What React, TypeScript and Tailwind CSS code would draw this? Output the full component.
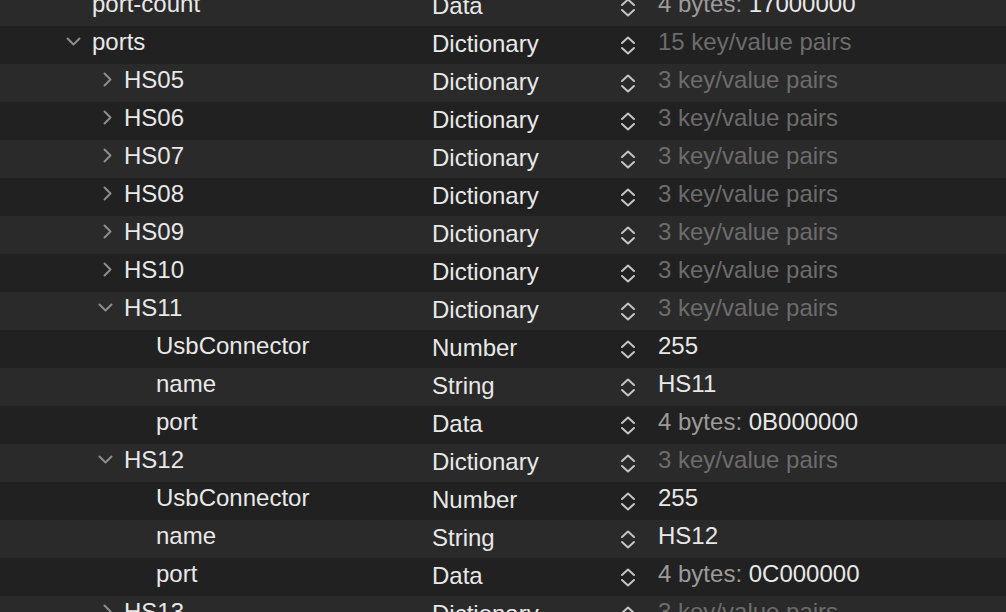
import React from 'react';

type Row = {
  key: string;
  level: number;
  type: string;
  value: string;
  valuePrefix?: string;
  expand?: 'open' | 'closed';
};

const rows: Row[] = [
  { key: 'port-count', level: 0, type: 'Data', valuePrefix: '4 bytes: ', value: '17000000' },
  { key: 'ports', level: 0, type: 'Dictionary', value: '15 key/value pairs', expand: 'open' },
  { key: 'HS05', level: 1, type: 'Dictionary', value: '3 key/value pairs', expand: 'closed' },
  { key: 'HS06', level: 1, type: 'Dictionary', value: '3 key/value pairs', expand: 'closed' },
  { key: 'HS07', level: 1, type: 'Dictionary', value: '3 key/value pairs', expand: 'closed' },
  { key: 'HS08', level: 1, type: 'Dictionary', value: '3 key/value pairs', expand: 'closed' },
  { key: 'HS09', level: 1, type: 'Dictionary', value: '3 key/value pairs', expand: 'closed' },
  { key: 'HS10', level: 1, type: 'Dictionary', value: '3 key/value pairs', expand: 'closed' },
  { key: 'HS11', level: 1, type: 'Dictionary', value: '3 key/value pairs', expand: 'open' },
  { key: 'UsbConnector', level: 2, type: 'Number', value: '255' },
  { key: 'name', level: 2, type: 'String', value: 'HS11' },
  { key: 'port', level: 2, type: 'Data', valuePrefix: '4 bytes: ', value: '0B000000' },
  { key: 'HS12', level: 1, type: 'Dictionary', value: '3 key/value pairs', expand: 'open' },
  { key: 'UsbConnector', level: 2, type: 'Number', value: '255' },
  { key: 'name', level: 2, type: 'String', value: 'HS12' },
  { key: 'port', level: 2, type: 'Data', valuePrefix: '4 bytes: ', value: '0C000000' },
  { key: 'HS13', level: 1, type: 'Dictionary', value: '3 key/value pairs', expand: 'closed' },
];

// chevron box is 26px wide, text starts after it
const indents = ['pl-[66px]', 'pl-[98px]', 'pl-[130px]'];

const Disclosure = ({ state }: { state?: 'open' | 'closed' }) => (
  <div className="w-[26px] h-[31px] shrink-0 flex items-center">
    {state === 'open' && (
      <svg width="15" height="9" viewBox="0 0 15 9">
        <polyline points="1.5,1.5 7.5,7.5 13.5,1.5" fill="none" stroke="#8d8d8d" strokeWidth="2" strokeLinecap="round" strokeLinejoin="round" />
      </svg>
    )}
    {state === 'closed' && (
      <svg width="9" height="15" viewBox="0 0 9 15" className="ml-[5px]">
        <polyline points="1.5,1.5 7.5,7.5 1.5,13.5" fill="none" stroke="#8d8d8d" strokeWidth="2" strokeLinecap="round" strokeLinejoin="round" />
      </svg>
    )}
  </div>
);

const Stepper = () => (
  <svg width="16" height="19" viewBox="0 0 16 19">
    <polyline points="2,7 8,1.5 14,7" fill="none" stroke="#c4c4c4" strokeWidth="2" strokeLinecap="round" strokeLinejoin="round" />
    <polyline points="2,12 8,17.5 14,12" fill="none" stroke="#c4c4c4" strokeWidth="2" strokeLinecap="round" strokeLinejoin="round" />
  </svg>
);

const App: React.FC = () => {
  return (
    <div className="h-[612px] w-[1006px] overflow-hidden bg-[#212121] text-[24px] text-[#e8e8e8] font-['Liberation_Sans',Arial,sans-serif]">
      <div className="flex flex-col -mt-[12px]">
        {rows.map((r, i) => (
          <div key={i} className={`flex h-[38px] items-start ${i % 2 === 0 ? 'bg-[#2a2a2a]' : 'bg-[#212121]'}`}>
            <div className={`w-[432px] shrink-0 flex items-start leading-[32px] whitespace-nowrap ${indents[r.level]}`}>
              <Disclosure state={r.expand} />
              <span>{r.key}</span>
            </div>
            <div className="w-[188px] shrink-0 leading-[36px]">{r.type}</div>
            <div className="w-[38px] shrink-0 h-[38px] flex items-center">
              <Stepper />
            </div>
            <div className="leading-[32px] whitespace-nowrap">
              {r.valuePrefix && <span className="text-[#9b9b9b]">{r.valuePrefix}</span>}
              <span className={r.type === 'Dictionary' ? 'text-[#6c6c6c]' : ''}>{r.value}</span>
            </div>
          </div>
        ))}
      </div>
    </div>
  );
};

export default App;
